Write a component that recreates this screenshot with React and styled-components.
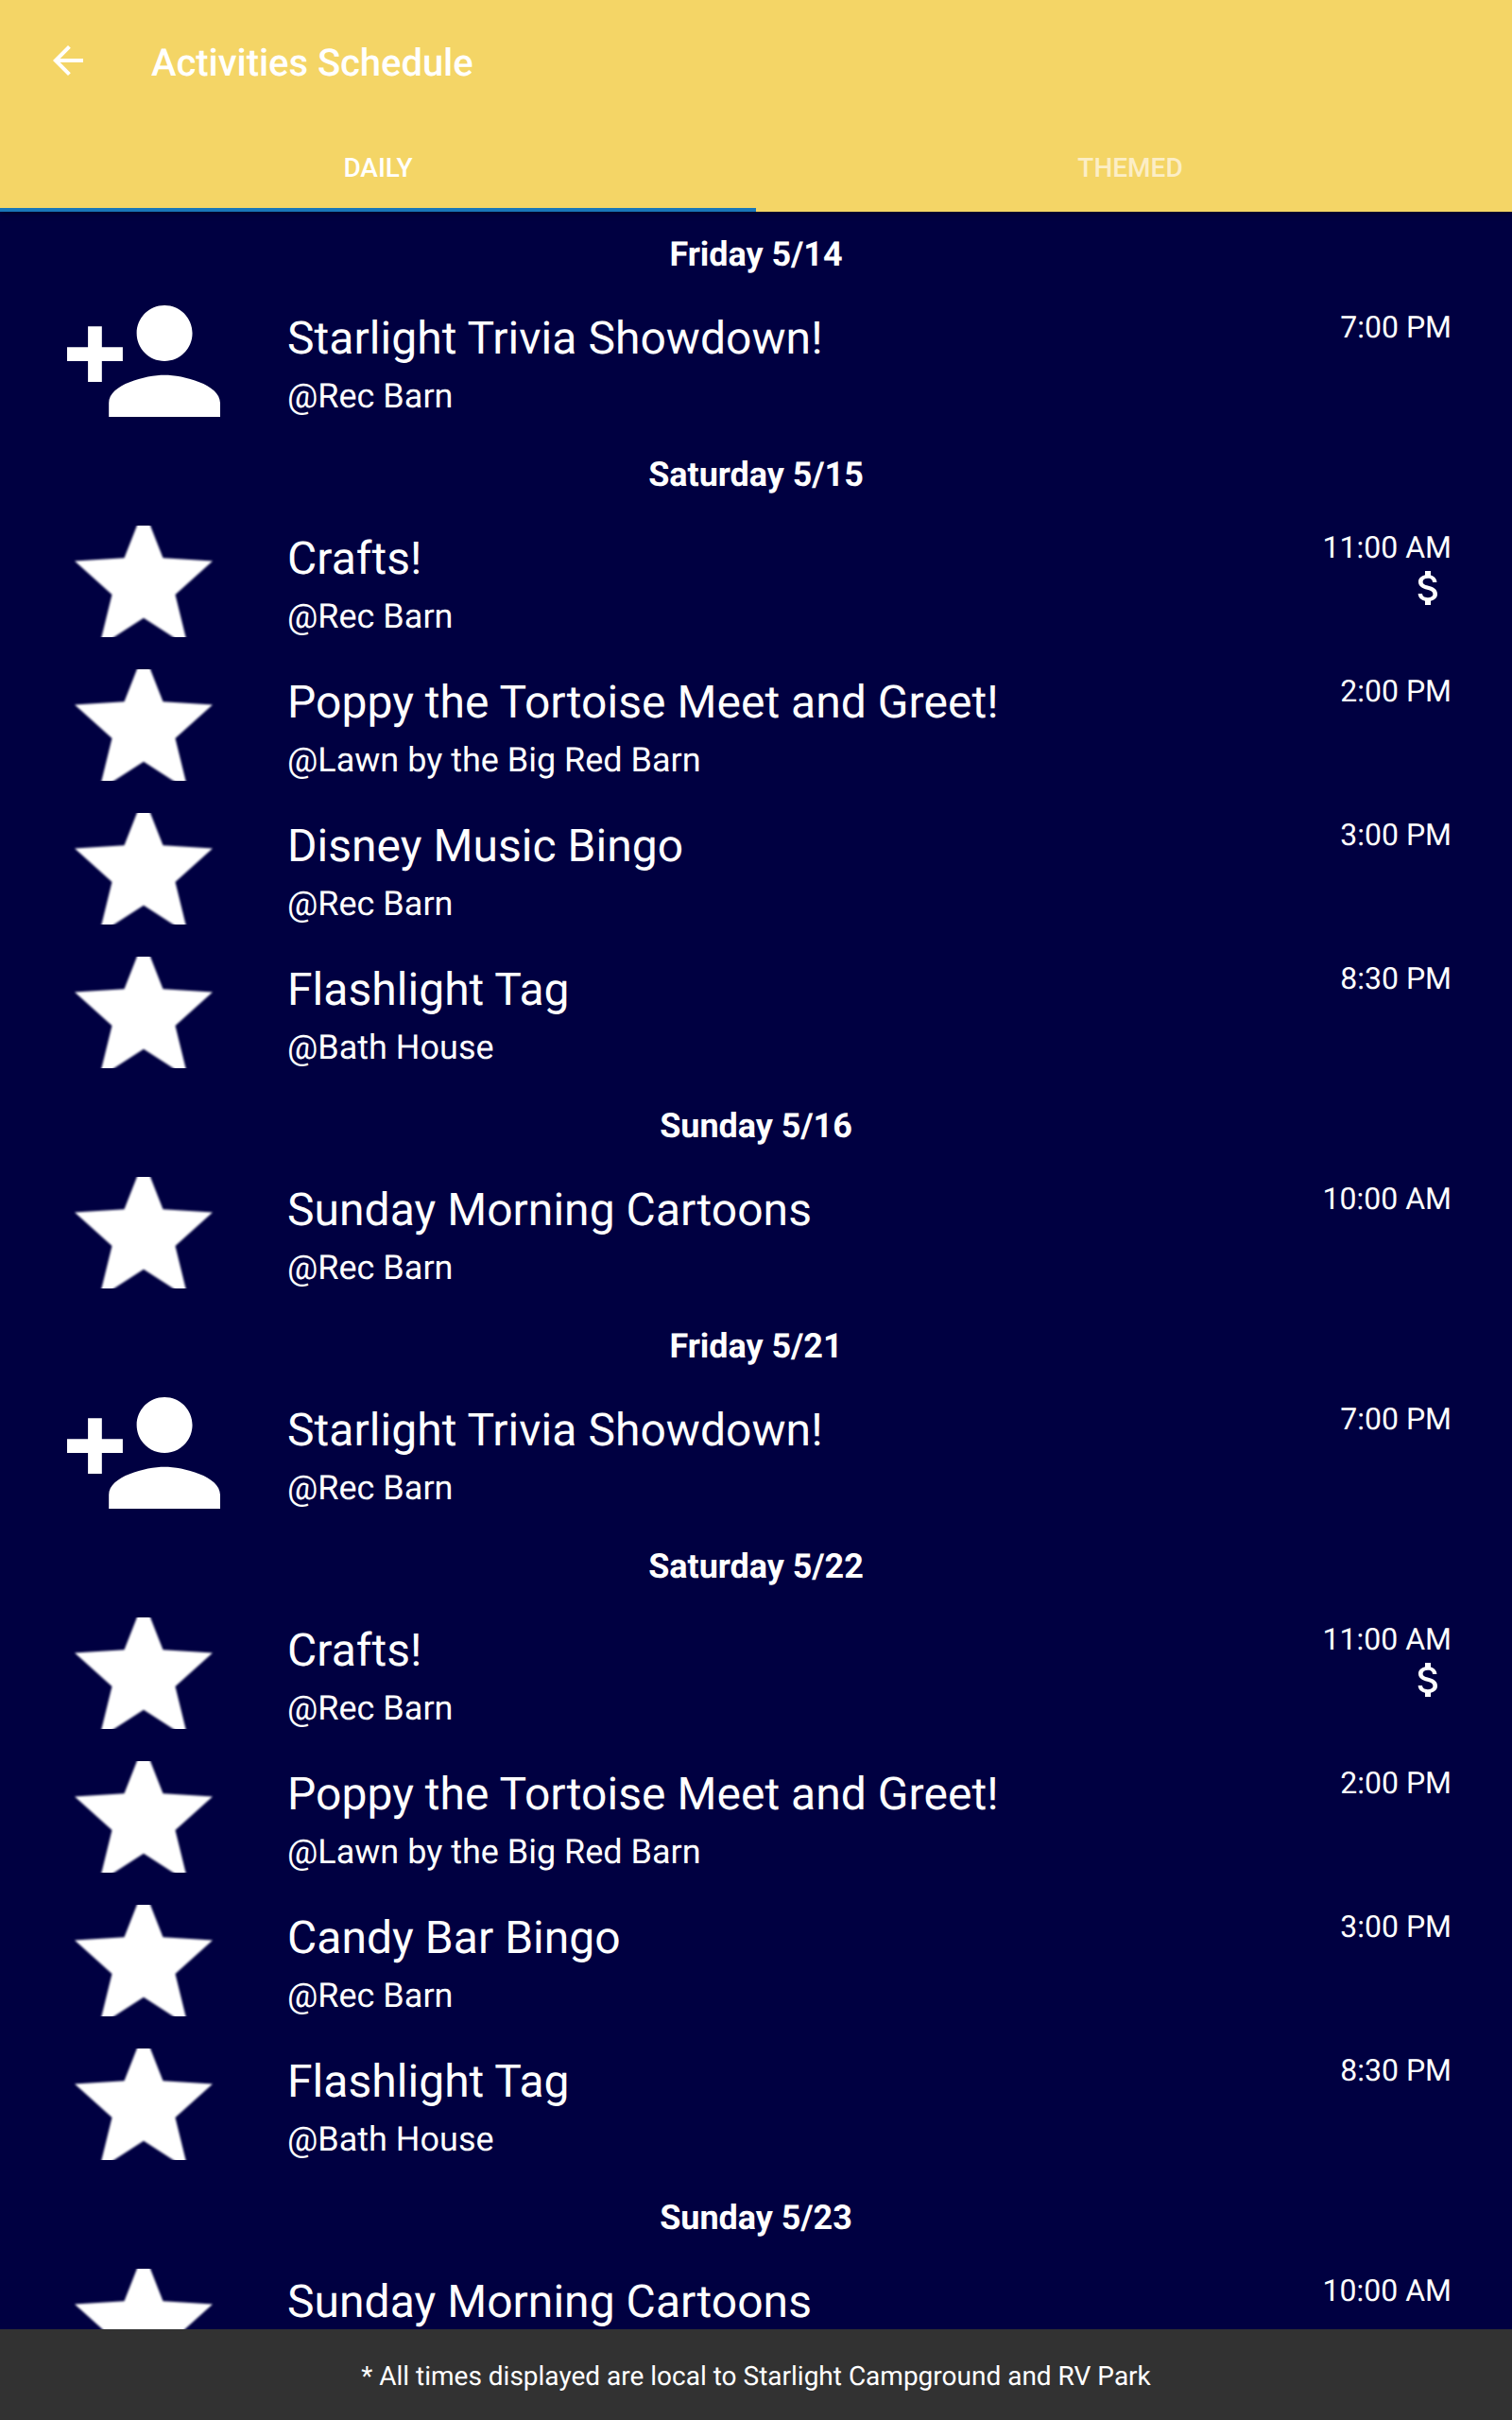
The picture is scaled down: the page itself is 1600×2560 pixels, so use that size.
import React from "react";
import styled, { createGlobalStyle } from "styled-components";

const GlobalStyle = createGlobalStyle`
  *, *::before, *::after { box-sizing: border-box; }
  body { margin: 0; background: #000041; }
`;

const Screen = styled.div`
  display: flex;
  flex-direction: column;
  width: 1600px;
  height: 2560px;
  overflow: hidden;
  background: #000041;
  color: #fff;
  font-family: Roboto, "Liberation Sans", sans-serif;
  text-rendering: geometricPrecision;
`;

const AppBar = styled.header`
  flex: none;
  height: 224px;
  display: flex;
  flex-direction: column;
  background: #f4d566;
  box-shadow: 0 1px 6px rgba(0, 0, 0, 0.5);
  z-index: 1;
`;

const Toolbar = styled.div`
  height: 128px;
  display: flex;
  align-items: center;
  padding-left: 48px;
`;

const BackButton = styled.button`
  width: 48px;
  height: 48px;
  padding: 0;
  border: 0;
  background: none;
  color: inherit;

  svg { display: block; }
`;

const ScreenTitle = styled.h1`
  margin: 6px 0 0 64px;
  font-size: 40px;
  line-height: 48px;
  font-weight: 500;
  letter-spacing: -0.05px;
`;

const Tabs = styled.nav`
  flex: 1;
  display: grid;
  grid-template-columns: 1fr 1fr;
`;

const Tab = styled.button`
  padding: ${({ $active }) => ($active ? "8px 0 0" : "8px 8px 0 0")};
  border: 0;
  border-bottom: 4px solid ${({ $active }) => ($active ? "#1976b8" : "transparent")};
  background: none;
  color: ${({ $active }) => ($active ? "#fff" : "#fceec6")};
  font: 500 28px/34px Roboto, "Liberation Sans", sans-serif;
`;

const List = styled.main`
  flex: 1;
  min-height: 0;
  overflow: hidden;
`;

const DayHeading = styled.h2`
  height: 81px;
  margin: 0;
  padding-top: 24px;
  font-size: 36px;
  line-height: 42px;
  font-weight: 700;
  letter-spacing: -0.06px;
  text-align: center;
`;

const Row = styled.article`
  display: flex;
  height: 152px;
  padding: 18px 64px 0 0;
`;

const IconColumn = styled.div`
  flex: none;
  width: 304px;
  display: flex;
  justify-content: center;

  svg { display: block; }
`;

const SoftPath = styled.path`
  filter: blur(0.8px);
`;

const Details = styled.div`
  flex: 1;
  padding-top: 7px;
`;

const ActivityName = styled.h3`
  margin: 0;
  font-size: 48px;
  line-height: 56px;
  font-weight: 400;
  letter-spacing: 0.04px;
`;

const Place = styled.p`
  margin: 12px 0 0;
  font-size: 36px;
  line-height: 42px;
`;

const Meta = styled.div`
  display: flex;
  flex-direction: column;
  align-items: flex-end;
  padding-top: 4px;
`;

const Time = styled.time`
  font-size: 32px;
  line-height: 38px;
`;

const Footer = styled.footer`
  flex: none;
  height: 96px;
  display: flex;
  align-items: center;
  justify-content: center;
  padding-top: 2px;
  background: #323232;
  font-size: 28px;
`;

const ArrowBackIcon = () => (
  <svg width="48" height="48" viewBox="0 0 24 24" fill="currentColor">
    <path d="M20 11H7.83l5.59-5.59L12 4l-8 8 8 8 1.41-1.41L7.83 13H20v-2z" />
  </svg>
);

const PersonAddIcon = () => (
  <svg width="162" height="118" viewBox="1 4 22 16" fill="currentColor">
    <path d="M15 12c2.21 0 4-1.79 4-4s-1.79-4-4-4-4 1.79-4 4 1.79 4 4 4zm-9-2V7H4v3H1v2h3v3h2v-3h3v-2H6zm9 4c-2.67 0-8 1.34-8 4v2h16v-2c0-2.66-5.33-4-8-4z" />
  </svg>
);

const StarIcon = () => (
  <svg width="162" height="118" viewBox="0 0 162 118" fill="currentColor">
    <SoftPath d="M81 -18L101.5 34.2L154 37.5L114.5 73L128 128L81 97.8L34 128L47.5 73L8 37.5L60.5 34.2Z" />
  </svg>
);

const DollarIcon = () => (
  <svg width="48" height="48" viewBox="0 0 24 24" fill="currentColor">
    <path d="M11.8 10.9c-2.27-.59-3-1.2-3-2.15 0-1.09 1.01-1.85 2.7-1.85 1.78 0 2.44.85 2.5 2.1h2.21c-.07-1.72-1.12-3.3-3.21-3.81V3h-3v2.16c-1.94.42-3.5 1.68-3.5 3.61 0 2.31 1.91 3.46 4.7 4.13 2.5.6 3 1.48 3 2.41 0 .69-.49 1.79-2.7 1.79-2.06 0-2.87-.92-2.98-2.1h-2.2c.12 2.19 1.76 3.42 3.68 3.83V21h3v-2.15c1.95-.37 3.5-1.5 3.5-3.55 0-2.84-2.43-3.81-4.7-4.4z" />
  </svg>
);

const trivia = { name: "Starlight Trivia Showdown!", place: "@Rec Barn", time: "7:00 PM", signUp: true };
const crafts = { name: "Crafts!", place: "@Rec Barn", time: "11:00 AM", paid: true };
const poppy = { name: "Poppy the Tortoise Meet and Greet!", place: "@Lawn by the Big Red Barn", time: "2:00 PM" };
const disneyBingo = { name: "Disney Music Bingo", place: "@Rec Barn", time: "3:00 PM" };
const candyBingo = { name: "Candy Bar Bingo", place: "@Rec Barn", time: "3:00 PM" };
const tag = { name: "Flashlight Tag", place: "@Bath House", time: "8:30 PM" };
const cartoons = { name: "Sunday Morning Cartoons", time: "10:00 AM" };

const days = [
  { label: "Friday 5/14", items: [trivia] },
  { label: "Saturday 5/15", items: [crafts, poppy, disneyBingo, tag] },
  { label: "Sunday 5/16", items: [{ ...cartoons, place: "@Rec Barn" }] },
  { label: "Friday 5/21", items: [trivia] },
  { label: "Saturday 5/22", items: [crafts, poppy, candyBingo, tag] },
  { label: "Sunday 5/23", items: [cartoons] },
];

const Activity = ({ name, place, time, signUp, paid }) => (
  <Row>
    <IconColumn>{signUp ? <PersonAddIcon /> : <StarIcon />}</IconColumn>
    <Details>
      <ActivityName>{name}</ActivityName>
      {place && <Place>{place}</Place>}
    </Details>
    <Meta>
      <Time>{time}</Time>
      {paid && <DollarIcon />}
    </Meta>
  </Row>
);

export default function App() {
  return (
    <>
      <GlobalStyle />
      <Screen>
        <AppBar>
          <Toolbar>
            <BackButton aria-label="Back"><ArrowBackIcon /></BackButton>
            <ScreenTitle>Activities Schedule</ScreenTitle>
          </Toolbar>
          <Tabs>
            <Tab $active>DAILY</Tab>
            <Tab>THEMED</Tab>
          </Tabs>
        </AppBar>
        <List>
          {days.map((day) => (
            <section key={day.label}>
              <DayHeading>{day.label}</DayHeading>
              {day.items.map((item) => <Activity key={item.name} {...item} />)}
            </section>
          ))}
        </List>
        <Footer>* All times displayed are local to Starlight Campground and RV Park</Footer>
      </Screen>
    </>
  );
}
